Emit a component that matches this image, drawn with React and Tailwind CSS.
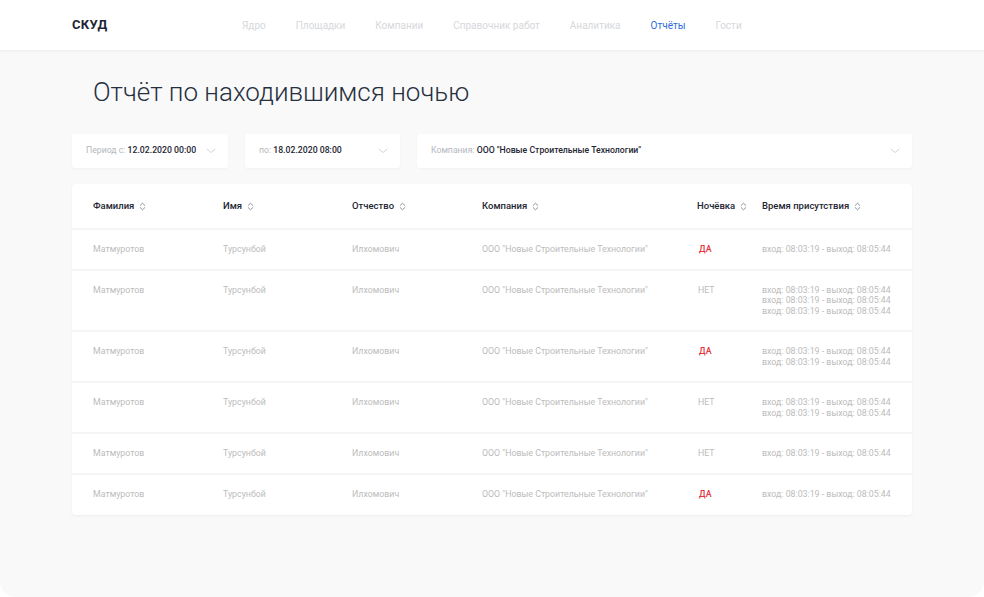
import React from "react";

const navItems = ["Ядро", "Площадки", "Компании", "Справочник работ", "Аналитика", "Отчёты", "Гости"];

const columns = [
	{ title: "Фамилия", width: "w-[130px]" },
	{ title: "Имя", width: "w-[129px]" },
	{ title: "Отчество", width: "w-[130px]" },
	{ title: "Компания", width: "w-[215px]" },
	{ title: "Ночёвка", width: "w-[65px]" },
	{ title: "Время присутствия", width: "flex-1" },
];

const visit = "вход: 08:03:19 - выход: 08:05:44";

const rows = [
	{ night: true, visits: 1 },
	{ night: false, visits: 3 },
	{ night: true, visits: 2 },
	{ night: false, visits: 2 },
	{ night: false, visits: 1 },
	{ night: true, visits: 1 },
];

// Small up/down sort arrows next to header titles
const SortIcon = () => (
	<svg width="7" height="9" viewBox="0 0 7 9" fill="none" className="ml-[5px]">
		<path d="M1.2 3.4L3.5 1.2L5.8 3.4" stroke="#8a919c" strokeWidth="1" strokeLinecap="round" strokeLinejoin="round" />
		<path d="M1.2 5.6L3.5 7.8L5.8 5.6" stroke="#8a919c" strokeWidth="1" strokeLinecap="round" strokeLinejoin="round" />
	</svg>
);

const Chevron = () => (
	<svg width="10" height="6" viewBox="0 0 10 6" fill="none">
		<path d="M1 1.2L5 4.5L9 1.2" stroke="#cfd3d8" strokeWidth="1" strokeLinecap="round" strokeLinejoin="round" />
	</svg>
);

const FilterBox = ({ label, value, className }) => (
	<div className={`flex items-center justify-between h-[34px] bg-white rounded-[3px] pl-[14px] pr-[12px] shadow-[0_1px_2px_rgba(0,0,0,0.03)] ${className}`}>
		<div className="text-[8.7px]">
			<span className="text-[#b4b8bd]">{label} </span>
			<span className="font-medium text-[#1e2633]">{value}</span>
		</div>
		<Chevron />
	</div>
);

const App = () => {
	return (
		<div className="bg-white" style={{ fontFamily: "Roboto, 'Liberation Sans', sans-serif" }}>
			<div className="h-[597px] bg-[#f9f9f9] rounded-b-[16px] overflow-hidden">
				{/* Header */}
				<header className="h-[50px] bg-white flex items-center px-[72px] shadow-[0_1px_3px_rgba(0,0,0,0.05)]">
					<div className="text-[13px] font-bold text-[#1d2636] tracking-[0.3px] w-[170px]">СКУД</div>
					<nav className="flex items-center gap-[30px] text-[10px]">
						{navItems.map((item) => (
							<span key={item} className={item === "Отчёты" ? "text-[#2e6bd8]" : "text-[#d6d8db]"}>
								{item}
							</span>
						))}
					</nav>
				</header>

				<main className="px-[72px]">
					<h1 className="pl-[21px] pt-[24px] text-[26px] font-light text-[#263040] leading-[36px]">
						Отчёт по находившимся ночью
					</h1>

					{/* Filters */}
					<div className="flex gap-[17px] mt-[24px]">
						<FilterBox label="Период с:" value="12.02.2020 00:00" className="w-[156px]" />
						<FilterBox label="по:" value="18.02.2020 08:00" className="w-[155px]" />
						<FilterBox label="Компания:" value={'ООО "Новые Строительные Технологии"'} className="flex-1" />
					</div>

					{/* Table */}
					<div className="mt-[16px] pb-[2px] bg-white rounded-[4px] shadow-[0_1px_3px_rgba(0,0,0,0.05)]">
						<div className="flex items-center h-[44px] pl-[21px]">
							{columns.map((col) => (
								<div key={col.title} className={`${col.width} flex items-center text-[9.5px] font-medium text-[#1e2633]`}>
									{col.title}
									<SortIcon />
								</div>
							))}
						</div>
						{rows.map((row, i) => (
							<div key={i} className="flex border-t-2 border-[#f5f5f5] pl-[21px] py-[14px] text-[8.8px] leading-[10.5px] text-[#bcbcbc]">
								<div className="w-[130px]">Матмуротов</div>
								<div className="w-[129px]">Турсунбой</div>
								<div className="w-[130px]">Илхомович</div>
								<div className="w-[215px]">ООО "Новые Строительные Технологии"</div>
								<div className="w-[65px]">
									{row.night ? (
										<span className="text-[#e5343f] font-medium pl-[2px]">ДА</span>
									) : (
										<span className="pl-[1px]">НЕТ</span>
									)}
								</div>
								<div className="flex-1 flex flex-col">
									{Array.from({ length: row.visits }).map((_, j) => (
										<span key={j}>{visit}</span>
									))}
								</div>
							</div>
						))}
					</div>
				</main>
			</div>
		</div>
	);
};

export default App;
